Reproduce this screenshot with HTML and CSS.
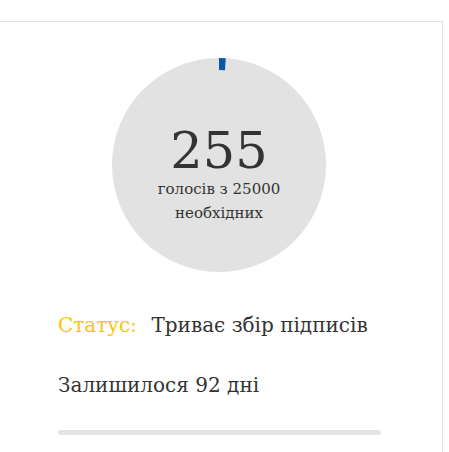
FILE: index.html
```html
<!DOCTYPE html>
<html lang="uk">
<head>
  <meta charset="UTF-8" />
  <title>Петиція</title>
  <link rel="stylesheet" href="styles.css">
</head>
<body>
  <div class="petition-card">
    <div class="counter">
      <svg class="ring" width="214" height="214" viewBox="0 0 214 214">
        <circle cx="107" cy="107" r="107" fill="#e2e2e2" />
        <!-- 255 з 25000 = 1.02% кола -->
        <circle cx="107" cy="107" r="101" fill="none" stroke="#0a56a5" stroke-width="12"
                stroke-dasharray="6.5 700" transform="rotate(-90 107 107)" />
      </svg>
      <div class="counter-text">
        <div class="votes">255</div>
        <div class="votes-label">голосів з 25000<br>необхідних</div>
      </div>
    </div>

    <div class="status"><span class="status-label">Статус:</span> Триває збір підписів</div>
    <div class="days">Залишилося 92 дні</div>
    <div class="progress"></div>
  </div>
</body>
</html>
```

FILE: styles.css
```css
* { box-sizing: border-box; }
body {
  margin: 0; background: #fff; color: #333;
  font-family: "DejaVu Serif", "Liberation Serif", serif;
}
.petition-card {
  margin-top: 21px; width: 443px; height: 431px;
  border-top: 1px solid #e4e4e4; border-right: 1px solid #e4e4e4;
  padding: 36px 0 0 58px;
}
.counter {
  display: grid; width: 214px; height: 214px;
  margin-left: 54px;
}
.ring, .counter-text { grid-area: 1 / 1; }
.counter-text {
  display: flex; flex-direction: column; align-items: center;
  padding-top: 68px;
}
.votes {
  font-size: 51px; line-height: 50px; color: #333;
}
.votes-label {
  font-size: 15px; line-height: 24px; text-align: center; margin-top: 1px;
}
.status {
  margin-top: 38px; font-size: 20px; line-height: 30px;
}
.status-label { color: #fcc500; margin-right: 8px; }
.days {
  margin-top: 30px; font-size: 20px; line-height: 30px;
}
.progress {
  margin-top: 30px; width: 323px; height: 5px;
  background: #e4e4e4; border-radius: 3px;
}
```
